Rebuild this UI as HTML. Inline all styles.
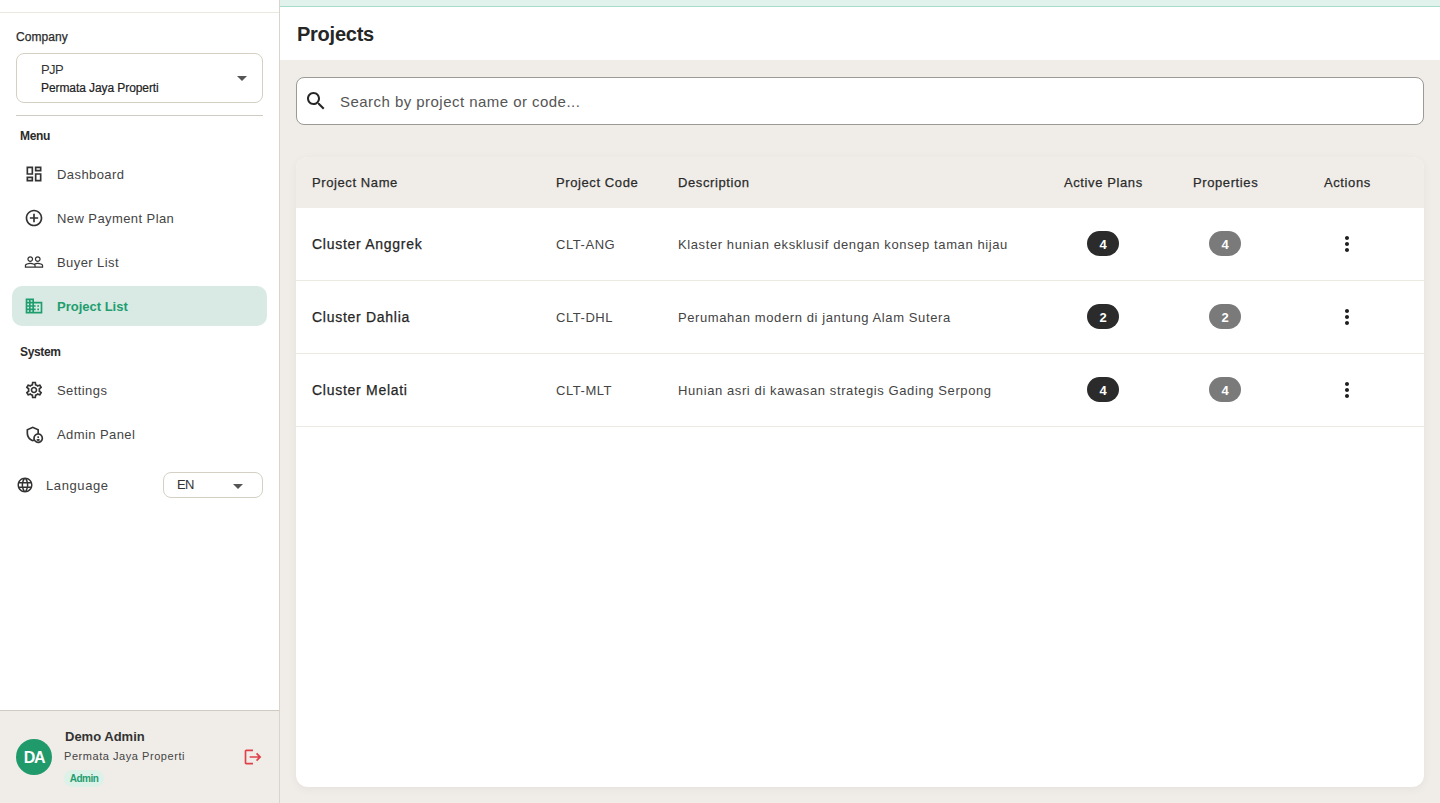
<!DOCTYPE html>
<html><head><meta charset="utf-8">
<style>
*{margin:0;padding:0;box-sizing:border-box}
html,body{width:1440px;height:803px;overflow:hidden;background:#f0ede8;font-family:"Liberation Sans",sans-serif;color:#2b2b2b}
.a{position:absolute}
.t{position:absolute;line-height:1;white-space:nowrap}
svg{position:absolute;display:block}
#side{position:absolute;left:0;top:0;width:280px;height:803px;background:#fff;border-right:1px solid #d9d5cc}
#topline{left:0;top:12px;width:279px;height:1px;background:#ebe8e0}
.sel{position:absolute;border:1px solid #d4d0c4;border-radius:8px;background:#fff}
.nav{color:#444;font-size:13px;letter-spacing:.42px}
.lbl{font-size:12px;font-weight:700;color:#2b2b2b;letter-spacing:-.35px}
#active{left:12px;top:286px;width:255px;height:40px;background:#d8eae3;border-radius:10px}
#foot{position:absolute;left:0;top:710px;width:279px;height:93px;background:#f0ede8;border-top:1px solid #cfcbc2}
#main{position:absolute;left:280px;top:0;width:1160px;height:803px;background:#f0ede8}
#strip{left:280px;top:0;width:1160px;height:7px;background:#e0f2eb;border-bottom:1px solid #a6dcc8}
#hdr{left:280px;top:7px;width:1160px;height:53px;background:#fff}
#search{left:296px;top:77px;width:1128px;height:48px;background:#fff;border:1px solid #9c9a94;border-radius:8px}
#card{left:296px;top:157px;width:1128px;height:630px;background:#fff;border-radius:12px;box-shadow:0 2px 10px rgba(0,0,0,.05);overflow:hidden}
#thead{left:0;top:0;width:1128px;height:51px;background:#f0ede8}
.rowb{left:0;width:1128px;height:1px;background:#ebe9e2}
.th{font-size:13px;color:#2b2b2b;letter-spacing:.6px;-webkit-text-stroke:.25px #2b2b2b}
.name{font-size:14px;color:#262626;letter-spacing:.72px;-webkit-text-stroke:.25px #262626}
.code{font-size:13px;color:#444;letter-spacing:.55px}
.desc{font-size:13px;color:#444;letter-spacing:.6px}
.pill{position:absolute;width:32px;height:25px;border-radius:12.5px;color:#fff;font-size:13px;font-weight:700;text-align:center;line-height:27px}
</style></head><body>
<div id="main"></div>
<div class="a" id="strip"></div>
<div class="a" id="hdr"></div>
<div class="t" style="left:297px;top:24px;font-size:20px;font-weight:700;letter-spacing:-.25px;color:#262626">Projects</div>

<div class="a" id="search">
  <svg style="left:7px;top:11px" width="24" height="24" viewBox="0 0 24 24"><path fill="#262626" d="M15.5 14h-.79l-.28-.27C15.41 12.59 16 11.11 16 9.5 16 5.91 13.09 3 9.5 3S3 5.91 3 9.5 5.91 16 9.5 16c1.61 0 3.09-.59 4.23-1.57l.27.28v.79l5 4.99L20.49 19l-4.99-5zm-6 0C7.01 14 5 11.99 5 9.5S7.01 5 9.5 5 14 7.01 14 9.5 11.99 14 9.5 14z"/></svg>
  <div class="t" style="left:43px;top:16px;font-size:15px;color:#555;letter-spacing:.46px">Search by project name or code...</div>
</div>

<div class="a" id="card">
  <div class="a" id="thead"></div>
  <div class="t th" style="left:16px;top:19px">Project Name</div>
  <div class="t th" style="left:260px;top:19px">Project Code</div>
  <div class="t th" style="left:382px;top:19px">Description</div>
  <div class="t th" style="left:768px;top:19px">Active Plans</div>
  <div class="t th" style="left:897px;top:19px">Properties</div>
  <div class="t th" style="left:1028px;top:19px">Actions</div>

  <div class="t name" style="left:16px;top:80px">Cluster Anggrek</div>
  <div class="t code" style="left:260px;top:81px">CLT-ANG</div>
  <div class="t desc" style="left:382px;top:81px">Klaster hunian eksklusif dengan konsep taman hijau</div>
  <div class="pill" style="left:791px;top:74px;background:#2b2b2b">4</div>
  <div class="pill" style="left:913px;top:74px;background:#7a7a7a">4</div>
  <svg style="left:1039px;top:75px" width="24" height="24" viewBox="0 0 24 24"><path fill="#1f1f1f" d="M12 8c1.1 0 2-.9 2-2s-.9-2-2-2-2 .9-2 2 .9 2 2 2zm0 2c-1.1 0-2 .9-2 2s.9 2 2 2 2-.9 2-2-.9-2-2-2zm0 6c-1.1 0-2 .9-2 2s.9 2 2 2 2-.9 2-2-.9-2-2-2z"/></svg>
  <div class="a rowb" style="top:123px"></div>

  <div class="t name" style="left:16px;top:153px">Cluster Dahlia</div>
  <div class="t code" style="left:260px;top:154px">CLT-DHL</div>
  <div class="t desc" style="left:382px;top:154px">Perumahan modern di jantung Alam Sutera</div>
  <div class="pill" style="left:791px;top:147px;background:#2b2b2b">2</div>
  <div class="pill" style="left:913px;top:147px;background:#7a7a7a">2</div>
  <svg style="left:1039px;top:148px" width="24" height="24" viewBox="0 0 24 24"><path fill="#1f1f1f" d="M12 8c1.1 0 2-.9 2-2s-.9-2-2-2-2 .9-2 2 .9 2 2 2zm0 2c-1.1 0-2 .9-2 2s.9 2 2 2 2-.9 2-2-.9-2-2-2zm0 6c-1.1 0-2 .9-2 2s.9 2 2 2 2-.9 2-2-.9-2-2-2z"/></svg>
  <div class="a rowb" style="top:196px"></div>

  <div class="t name" style="left:16px;top:226px">Cluster Melati</div>
  <div class="t code" style="left:260px;top:227px">CLT-MLT</div>
  <div class="t desc" style="left:382px;top:227px">Hunian asri di kawasan strategis Gading Serpong</div>
  <div class="pill" style="left:791px;top:220px;background:#2b2b2b">4</div>
  <div class="pill" style="left:913px;top:220px;background:#7a7a7a">4</div>
  <svg style="left:1039px;top:221px" width="24" height="24" viewBox="0 0 24 24"><path fill="#1f1f1f" d="M12 8c1.1 0 2-.9 2-2s-.9-2-2-2-2 .9-2 2 .9 2 2 2zm0 2c-1.1 0-2 .9-2 2s.9 2 2 2 2-.9 2-2-.9-2-2-2zm0 6c-1.1 0-2 .9-2 2s.9 2 2 2 2-.9 2-2-.9-2-2-2z"/></svg>
  <div class="a rowb" style="top:269px"></div>
</div>

<!-- SIDEBAR -->
<div id="side">
  <div class="a" id="topline"></div>
  <div class="t" style="left:16px;top:31px;font-size:12px;color:#2b2b2b;letter-spacing:.05px;-webkit-text-stroke:.25px #2b2b2b">Company</div>
  <div class="sel" style="left:16px;top:53px;width:247px;height:50px">
    <div class="t" style="left:24px;top:9px;font-size:13px;color:#333;letter-spacing:-.6px">PJP</div>
    <div class="t" style="left:24px;top:28px;font-size:12px;color:#222;letter-spacing:-.08px;-webkit-text-stroke:.2px #222">Permata Jaya Properti</div>
    <svg style="left:213px;top:12px" width="24" height="24" viewBox="0 0 24 24"><path fill="#555" d="M7 10l5 5 5-5z"/></svg>
  </div>
  <div class="a" style="left:16px;top:115px;width:247px;height:1px;background:#cfcbc2"></div>

  <div class="t lbl" style="left:20px;top:130px">Menu</div>

  <svg style="left:24px;top:164px" width="20" height="20" viewBox="0 0 24 24"><path fill="#333" d="M19 5v2h-4V5h4M9 5v6H5V5h4m10 8v6h-4v-6h4M9 17v2H5v-2h4M21 3h-8v6h8V3zM11 3H3v10h8V3zm10 8h-8v10h8V11zm-10 4H3v6h8v-6z"/></svg>
  <div class="t nav" style="left:57px;top:168px">Dashboard</div>

  <svg style="left:24px;top:208px" width="20" height="20" viewBox="0 0 24 24"><path fill="#333" d="M13 7h-2v4H7v2h4v4h2v-4h4v-2h-4V7zm-1-5C6.48 2 2 6.48 2 12s4.48 10 10 10 10-4.48 10-10S17.52 2 12 2zm0 18c-4.41 0-8-3.59-8-8s3.59-8 8-8 8 3.59 8 8-3.59 8-8 8z"/></svg>
  <div class="t nav" style="left:57px;top:212px">New Payment Plan</div>

  <svg style="left:24px;top:252px" width="20" height="20" viewBox="0 0 24 24"><path fill="#333" d="M16.5 13c-1.2 0-3.07.34-4.5 1-1.43-.67-3.3-1-4.5-1C5.33 13 1 14.08 1 16.25V19h22v-2.75c0-2.17-4.33-3.25-6.5-3.25zm-4 4.5h-10v-1.25c0-.54 2.56-1.75 5-1.75s5 1.21 5 1.75v1.25zm9 0H14v-1.25c0-.46-.2-.86-.52-1.22.88-.3 1.96-.53 3.02-.53 2.44 0 5 1.21 5 1.75v1.25zM7.5 12c1.93 0 3.5-1.57 3.5-3.5S9.43 5 7.5 5 4 6.57 4 8.5 5.57 12 7.5 12zm0-5.5c1.1 0 2 .9 2 2s-.9 2-2 2-2-.9-2-2 .9-2 2-2zm9 5.5c1.93 0 3.5-1.57 3.5-3.5S18.43 5 16.5 5 13 6.57 13 8.5s1.57 3.5 3.5 3.5zm0-5.5c1.1 0 2 .9 2 2s-.9 2-2 2-2-.9-2-2 .9-2 2-2z"/></svg>
  <div class="t nav" style="left:57px;top:256px">Buyer List</div>

  <div class="a" id="active"></div>
  <svg style="left:24px;top:296px" width="20" height="20" viewBox="0 0 24 24"><path fill="#1f9d6f" d="M12 7V3H2v18h20V7H12zM6 19H4v-2h2v2zm0-4H4v-2h2v2zm0-4H4V9h2v2zm0-4H4V5h2v2zm4 12H8v-2h2v2zm0-4H8v-2h2v2zm0-4H8V9h2v2zm0-4H8V5h2v2zm10 12h-8v-2h2v-2h-2v-2h2v-2h-2V9h8v10zm-2-8h-2v2h2v-2zm0 4h-2v2h2v-2z"/></svg>
  <div class="t" style="left:57px;top:300px;font-size:13px;font-weight:700;color:#1f9d6f;letter-spacing:0">Project List</div>

  <div class="t lbl" style="left:20px;top:346px">System</div>

  <svg style="left:24px;top:380px" width="20" height="20" viewBox="0 0 24 24"><path fill="#333" d="M19.43 12.98c.04-.32.07-.64.07-.98 0-.34-.03-.66-.07-.98l2.11-1.65c.19-.15.24-.42.12-.64l-2-3.46c-.09-.16-.26-.25-.44-.25-.06 0-.12.01-.17.03l-2.49 1c-.52-.4-1.08-.73-1.69-.98l-.38-2.65C14.460 2.180 14.250 2 14 2h-4c-.25 0-.46.18-.49.42l-.38 2.650c-.61.25-1.17.59-1.69.98l-2.49-1c-.06-.02-.12-.03-.18-.03-.17 0-.34.09-.43.25l-2 3.46c-.13.22-.07.49.12.64l2.11 1.65c-.04.32-.07.65-.07.98s.03.66.07.98l-2.11 1.65c-.19.15-.24.42-.12.64l2 3.46c.09.16.26.25.44.25.06 0 .12-.01.17-.03l2.49-1c.52.4 1.08.73 1.69.98l.38 2.65c.03.24.24.42.49.42h4c.25 0 .46-.18.49-.42l.38-2.65c.61-.25 1.170-.59 1.69-.98l2.49 1c.06.02.12.03.18.03.17 0 .34-.09.43-.25l2-3.46c.12-.22.07-.49-.12-.64l-2.11-1.65zm-1.98-1.71c.04.31.05.52.05.73 0 .21-.02.43-.05.73l-.14 1.13.89.7 1.08.84-.7 1.21-1.27-.51-1.04-.42-.9.68c-.43.32-.84.56-1.25.73l-1.06.43-.16 1.13-.2 1.35h-1.4l-.19-1.35-.16-1.13-1.06-.43c-.43-.18-.83-.41-1.23-.71l-.91-.7-1.060.43-1.27.51-.7-1.21 1.08-.84.89-.7-.14-1.13c-.03-.31-.05-.54-.05-.74s.02-.43.05-.73l.14-1.13-.89-.7-1.08-.84.7-1.21 1.27.51 1.04.42.9-.68c.43-.32.84-.56 1.25-.73l1.06-.43.16-1.13.2-1.35h1.39l.19 1.35.16 1.13 1.06.43c.43.18.83.41 1.23.71l.91.7 1.06-.43 1.27-.51.7 1.21-1.07.85-.89.7.14 1.13zM12 8c-2.21 0-4 1.79-4 4s1.79 4 4 4 4-1.79 4-4-1.79-4-4-4zm0 6c-1.1 0-2-.9-2-2s.9-2 2-2 2 .9 2 2-.9 2-2 2z"/></svg>
  <div class="t nav" style="left:57px;top:384px">Settings</div>

  <svg style="left:24px;top:424px" width="20" height="20" viewBox="0 0 24 24"><path fill="#333" d="M17 17c.62 0 1.12-.5 1.12-1.12 0-.62-.5-1.12-1.12-1.12s-1.12.5-1.12 1.12c0 .62.5 1.12 1.12 1.12zm0 1c-.73 0-2.19.36-2.24 1.08.5.71 1.32 1.17 2.24 1.17s1.74-.46 2.24-1.17c-.05-.72-1.51-1.08-2.24-1.08z"/><path fill="#333" d="M18 11.09V6.27L10.5 3 3 6.27v4.91c0 4.54 3.2 8.79 7.5 9.82.55-.13 1.08-.32 1.6-.55C13.18 21.99 14.97 23 17 23c3.31 0 6-2.69 6-6 0-2.97-2.16-5.43-5-5.91zM11 17c0 .56.08 1.11.23 1.62-.24.11-.48.22-.73.3-3.17-1-5.5-4.24-5.5-7.74v-3.6l5.5-2.4 5.5 2.4v3.51c-2.84.48-5 2.94-5 5.91zm6 4c-2.21 0-4-1.790-4-4s1.79-4 4-4 4 1.79 4 4-1.79 4-4 4z"/></svg>
  <div class="t nav" style="left:57px;top:428px">Admin Panel</div>

  <svg style="left:16px;top:476px" width="18" height="18" viewBox="0 0 24 24"><path fill="#333" d="M11.99 2C6.47 2 2 6.48 2 12s4.47 10 9.99 10C17.52 22 22 17.52 22 12S17.52 2 11.99 2zm6.93 6h-2.95c-.32-1.25-.78-2.45-1.38-3.56 1.84.63 3.37 1.91 4.33 3.56zM12 4.04c.83 1.2 1.48 2.53 1.91 3.96h-3.82c.43-1.43 1.08-2.76 1.91-3.96zM4.26 14C4.1 13.36 4 12.69 4 12s.1-1.36.26-2h3.38c-.08.66-.14 1.32-.14 2 0 .68.06 1.34.14 2H4.26zm.82 2h2.95c.32 1.25.78 2.45 1.38 3.56-1.84-.63-3.37-1.9-4.33-3.56zm2.95-8H5.08c.96-1.66 2.49-2.93 4.33-3.560C8.81 5.55 8.35 6.75 8.03 8zM12 19.96c-.83-1.2-1.48-2.53-1.91-3.96h3.82c-.43 1.43-1.08 2.76-1.91 3.96zM14.34 14H9.66c-.09-.66-.16-1.32-.16-2 0-.68.07-1.35.16-2h4.68c.09.65.16 1.32.16 2 0 .68-.07 1.34-.16 2zm.25 5.56c.6-1.11 1.06-2.31 1.38-3.56h2.95c-.96 1.65-2.49 2.93-4.33 3.56zM16.36 14c.08-.66.14-1.32.14-2 0-.68-.06-1.34-.14-2h3.38c.16.64.26 1.31.26 2s-.1 1.36-.26 2h-3.38z"/></svg>
  <div class="t nav" style="left:46px;top:479px;letter-spacing:.6px">Language</div>
  <div class="sel" style="left:163px;top:472px;width:100px;height:26px">
    <div class="t" style="left:13px;top:5px;font-size:13px;color:#333;letter-spacing:-.6px">EN</div>
    <svg style="left:62px;top:1px" width="24" height="24" viewBox="0 0 24 24"><path fill="#555" d="M7 10l5 5 5-5z"/></svg>
  </div>

  <div id="foot">
    <div class="a" style="left:16px;top:28px;width:36px;height:36px;border-radius:50%;background:#20996b"></div>
    <div class="t" style="left:16px;top:39px;width:36px;text-align:center;font-size:16px;font-weight:700;color:#fff;letter-spacing:-1.3px">DA</div>
    <div class="t" style="left:65px;top:19px;font-size:13px;font-weight:700;color:#333;letter-spacing:0">Demo Admin</div>
    <div class="t" style="left:64px;top:40px;font-size:11px;color:#444;letter-spacing:.55px">Permata Jaya Properti</div>
    <div class="a" style="left:64px;top:59px;width:40px;height:17px;border-radius:8.5px;background:#dcf1e8"></div>
    <div class="t" style="left:64px;top:63px;width:40px;text-align:center;font-size:10px;font-weight:700;color:#1f9d6f;letter-spacing:-.5px">Admin</div>
    <svg style="left:243px;top:36px" width="20" height="20" viewBox="0 0 24 24"><path fill="#e0404a" d="M17 7l-1.41 1.41L18.17 11H8v2h10.17l-2.58 2.58L17 17l5-5zM4 5h8V3H4c-1.1 0-2 .9-2 2v14c0 1.1.9 2 2 2h8v-2H4V5z"/></svg>
  </div>
</div>
</body></html>
